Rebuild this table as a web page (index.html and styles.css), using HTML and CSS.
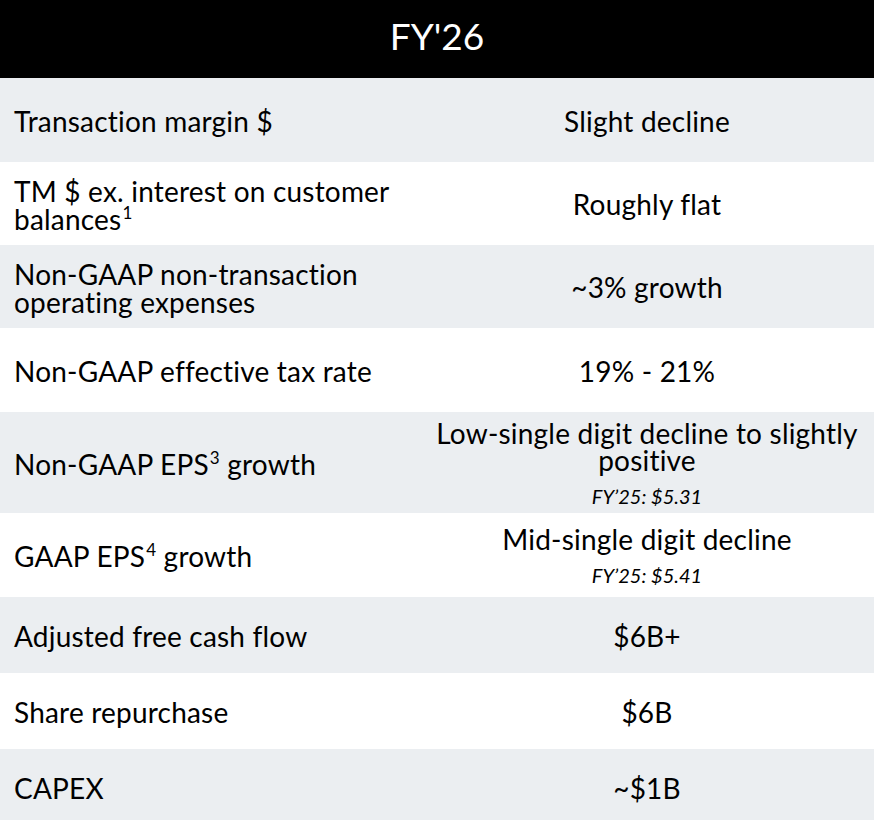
FILE: index.html
```html
<!DOCTYPE html>
<html>
<head>
<meta charset="utf-8">
<link rel="stylesheet" href="styles.css">
</head>
<body>
<div class="guide">
  <div class="head">FY'26</div>
  <div class="row gray"><div class="label">Transaction margin $</div><div class="value">Slight decline</div></div>
  <div class="row"><div class="label">TM $ ex. interest on customer<br>balances<sup>1</sup></div><div class="value">Roughly flat</div></div>
  <div class="row gray"><div class="label">Non-GAAP non-transaction<br>operating expenses</div><div class="value">~3% growth</div></div>
  <div class="row"><div class="label">Non-GAAP effective tax rate</div><div class="value">19% - 21%</div></div>
  <div class="row gray"><div class="label">Non-GAAP EPS<sup>3</sup> growth</div><div class="value">Low-single digit decline to slightly<br>positive<span class="note">FY’25: $5.31</span></div></div>
  <div class="row"><div class="label">GAAP EPS<sup>4</sup> growth</div><div class="value">Mid-single digit decline<span class="note">FY’25: $5.41</span></div></div>
  <div class="row gray"><div class="label">Adjusted free cash flow</div><div class="value">$6B+</div></div>
  <div class="row"><div class="label">Share repurchase</div><div class="value">$6B</div></div>
  <div class="row gray"><div class="label">CAPEX</div><div class="value">~$1B</div></div>
</div>
</body>
</html>
```
FILE: styles.css
```css
html, body {
  margin: 0;
  padding: 0;
  background: #ffffff;
}
body {
  font-family: Lato, "Liberation Sans", sans-serif;
  color: #000;
  width: 874px;
  height: 820px;
  overflow: hidden;
}
.guide {
  display: grid;
  grid-template-rows: 78px 84px 83px 83px 84px 101px 84px 76px 76px 76px;
}
.head {
  background: #000;
  color: #fff;
  font-size: 37px;
  display: flex;
  align-items: center;
  justify-content: center;
  padding-bottom: 8px;
}
.row {
  display: grid;
  grid-template-columns: 420px 1fr;
  align-items: center;
  background: #fff;
}
.row.gray {
  background: #ebeef1;
}
.label {
  padding-left: 14px;
  font-size: 28px;
  letter-spacing: 0.2px;
  line-height: 28px;
  padding-top: 2px;
}
.value {
  text-align: center;
  font-size: 28px;
  letter-spacing: 0.2px;
  line-height: 27px;
  padding-top: 2px;
}
.note {
  display: block;
  font-size: 20px;
  font-style: italic;
  line-height: 24px;
  margin-top: 10px;
  letter-spacing: 0;
}
sup {
  font-size: 17px;
  line-height: 0;
  vertical-align: 11px;
  margin-left: 1px;
}
```
